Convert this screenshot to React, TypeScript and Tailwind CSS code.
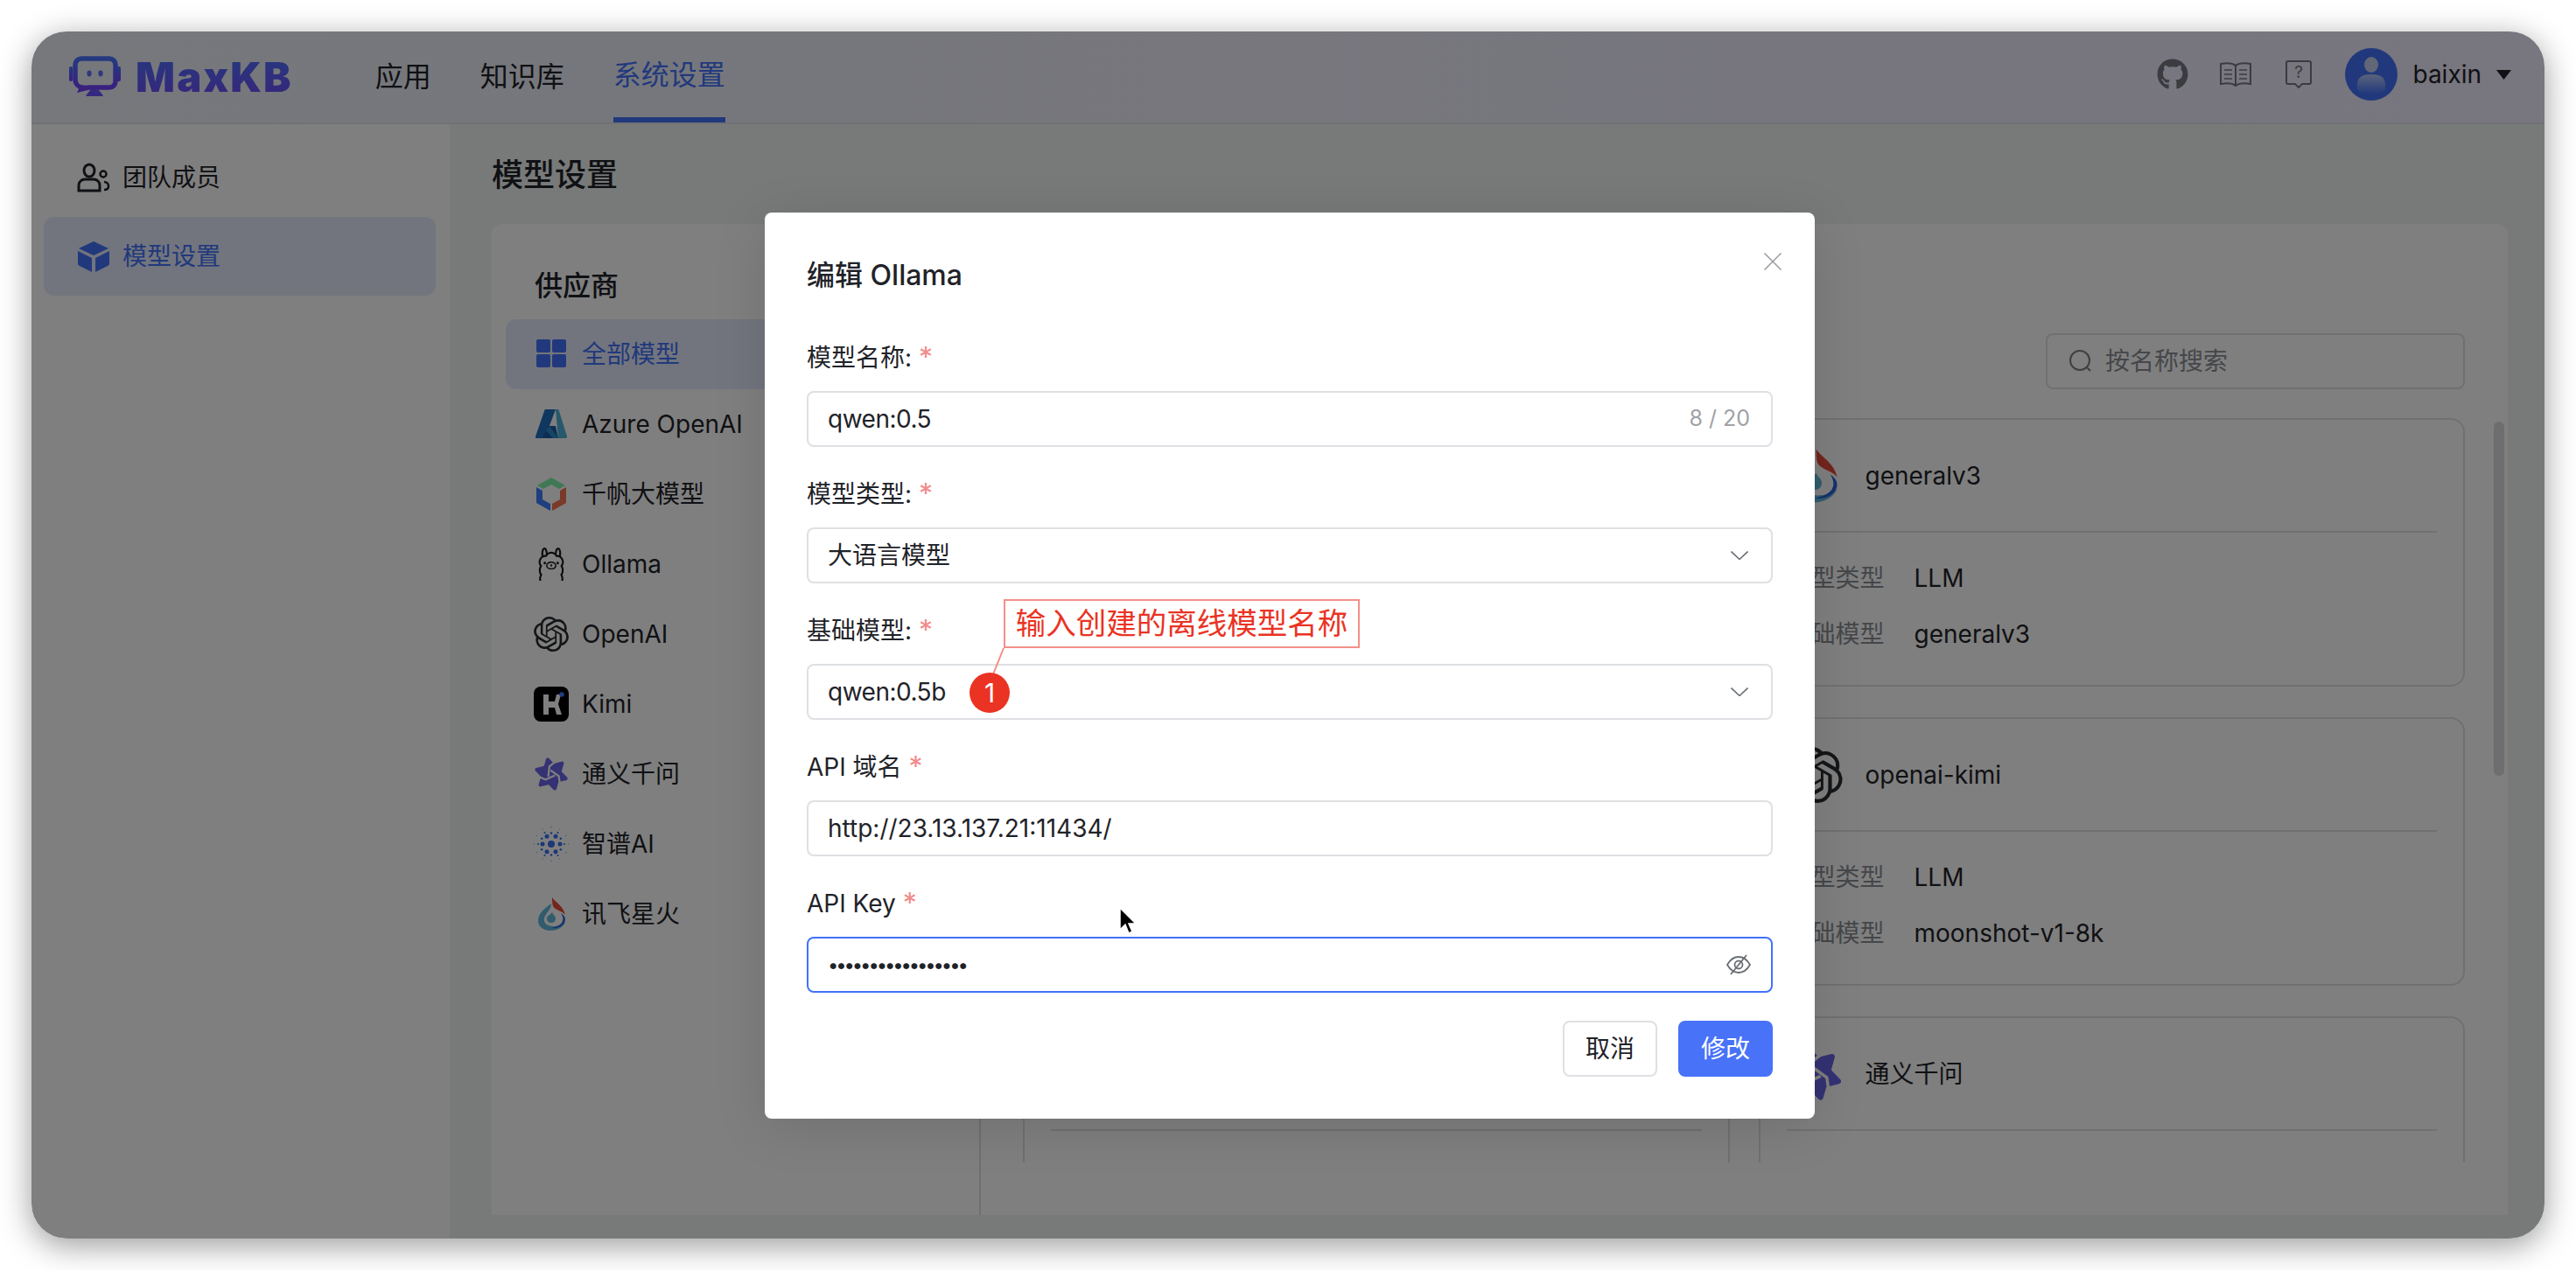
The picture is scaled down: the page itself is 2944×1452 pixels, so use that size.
import React from "react";
import { FaGithub } from "react-icons/fa";
import { SiOllama, SiOpenai } from "react-icons/si";

// ── Provider logos (40 box) ──

function AzureIcon({ size = 40 }: { size?: number }) {
  return (
    <svg width={size} height={size} viewBox="0 0 40 40">
      <path d="M14 3h11L13 35a2 2 0 0 1-2 1H3a1.500 1.500 0 0 1-1-2L12 5a2 2 0 0 1 2-2z" fill="#1f6fc0" />
      <path d="M25 3h2a2 2 0 0 1 2 2l9 29a1.500 1.500 0 0 1-1 2H28z" fill="#4fb0d8" />
      <path d="M17 22h8l3 14H13l-3-1z" fill="#1a5aa8" />
      <path d="M18 22l10 14h-6l-8-9z" fill="#2f8ac8" />
    </svg>
  );
}

function QianfanIcon({ size = 40 }: { size?: number }) {
  return (
    <svg width={size} height={size} viewBox="0 0 40 40">
      <path d="M20 1l16 9-7 4-9-5-9 5-7-4z" fill="#7ef0a8" />
      <path d="M3 12l7 4v10l9 5v8L3 30z" fill="#3e7eff" />
      <path d="M37 12l-7 4v10l-9 5v8l16-9z" fill="#f47454" />
    </svg>
  );
}

function KimiIcon({ size = 40 }: { size?: number }) {
  return (
    <svg width={size} height={size} viewBox="0 0 40 40">
      <rect width="40" height="40" rx="8" fill="#000" />
      <path d="M11 9h6v8h7l2-8h5l-3 11 4 12h-6l-2-8h-7v8h-6z" fill="#fff" />
      <circle cx="32" cy="9" r="2.800" fill="#3f7fff" />
    </svg>
  );
}

function TongyiIcon({ size = 40 }: { size?: number }) {
  return (
    <svg width={size} height={size} viewBox="0 0 40 40">
      <g transform="rotate(-14 20 20)">
        <path d="M20 3l15 26H5z" fill="#6a64e8" stroke="#6a64e8" strokeWidth="4" strokeLinejoin="round" />
        <path d="M20 37L5 11h30z" fill="#6a64e8" stroke="#6a64e8" strokeWidth="4" strokeLinejoin="round" />
        {[0, 120, 240].map((deg) => (
          <path
            key={deg}
            d="M16 22L20 11l9-4"
            fill="none"
            stroke="#fff"
            strokeWidth="2.200"
            transform={`rotate(${deg} 20 20)`}
          />
        ))}
      </g>
    </svg>
  );
}

function ZhipuIcon({ size = 40 }: { size?: number }) {
  const ring = (count: number, radius: number, dot: number, offset: number) =>
    Array.from({ length: count }, (_, i) => {
      const a = (i / count) * Math.PI * 2 + offset;
      return <circle key={`${radius}-${i}-${offset}`} cx={20 + radius * Math.cos(a)} cy={20 + radius * Math.sin(a)} r={dot} fill="#3a70f0" />;
    });
  return (
    <svg width={size} height={size} viewBox="0 0 40 40">
      <circle cx="20" cy="20" r="4" fill="#3a70f0" />
      {ring(6, 10, 2.5, 0)}
      {ring(6, 12.500, 1.300, Math.PI / 6)}
      {ring(6, 15, 1.100, 0)}
      {ring(6, 19.500, 0.600, Math.PI / 6)}
      {ring(6, 19.500, 0.500, 0)}
    </svg>
  );
}

function XunfeiIcon({ size = 40 }: { size?: number }) {
  return (
    <svg width={size} height={size} viewBox="0 0 40 40">
      <path d="M20 8C13 13 5 19 5 28c0 7 7 11 14 11 8 0 15-4 17-10-3 3-8 5-14 5-7 0-11-4-10-9 1-6 8-9 8-17z" fill="#62b8dc" />
      <path d="M21 18c1 3 4 4 4 7 0 3-2 5-5 5s-5-2-5-5c0-3 4-4 6-7z" fill="#62b8dc" />
      <path d="M31 19c5 3 6 7 4 11-3 5-9 7-15 6 6-1 12-4 13-8 1-3 0-6-2-9z" fill="#2a62d8" />
      <path d="M21 1c4 6 13 10 15 20-4-5-11-5-14-10-1-3-1-7-1-10z" fill="#e84a38" />
    </svg>
  );
}

function AllModelsIcon() {
  return (
    <svg width="40" height="40" viewBox="0 0 40 40" fill="#4272f8">
      <rect x="3" y="3" width="16" height="15" rx="2" />
      <rect x="21" y="3" width="16" height="15" rx="2" />
      <rect x="3" y="20" width="16" height="15" rx="2" />
      <rect x="21" y="20" width="16" height="15" rx="2" />
    </svg>
  );
}

const PROVIDERS = [
  { name: "全部模型", icon: <AllModelsIcon />, active: true },
  { name: "Azure OpenAI", icon: <AzureIcon /> },
  { name: "千帆大模型", icon: <QianfanIcon /> },
  { name: "Ollama", icon: <SiOllama size={38} color="#17181a" /> },
  { name: "OpenAI", icon: <SiOpenai size={40} color="#2a2c30" /> },
  { name: "Kimi", icon: <KimiIcon /> },
  { name: "通义千问", icon: <TongyiIcon /> },
  { name: "智谱AI", icon: <ZhipuIcon /> },
  { name: "讯飞星火", icon: <XunfeiIcon /> },
];

const MODELS = [
  { name: "generalv3", icon: <XunfeiIcon size={64} />, type: "LLM", base: "generalv3" },
  { name: "openai-kimi", icon: <SiOpenai size={64} color="#2a2c30" />, type: "LLM", base: "moonshot-v1-8k" },
  { name: "通义千问", icon: <TongyiIcon size={64} /> },
];

function Logo() {
  return (
    <div className="flex items-center gap-[14px] pb-[2px]">
      <svg width="62" height="46" viewBox="0 0 62 46">
        <defs>
          <linearGradient id="logo-grad" x1="0" y1="0" x2="0" y2="1">
            <stop offset="0" stopColor="#4a72ff" />
            <stop offset="1" stopColor="#7440ff" />
          </linearGradient>
        </defs>
        <rect x="0" y="12" width="4" height="17" rx="2" fill="url(#logo-grad)" />
        <rect x="54" y="12" width="5" height="17" rx="2" fill="url(#logo-grad)" />
        <path
          d="M14 3h32a7 7 0 0 1 7 7v19a7 7 0 0 1-7 7H22l-8 2 1-2a9 9 0 0 1-8-8V10a7 7 0 0 1 7-7z"
          fill="none"
          stroke="url(#logo-grad)"
          strokeWidth="5.500"
        />
        <ellipse cx="23" cy="20" rx="2.600" ry="3.400" fill="#5a70ff" />
        <ellipse cx="36" cy="20" rx="2.600" ry="3.400" fill="#5a70ff" />
        <path d="M25 38h8l5 6a1 1 0 0 1-1 2H21a1 1 0 0 1-1-2z" fill="#6a50ff" />
      </svg>
      <span className="text-[47px] leading-none font-black tracking-[2.2px] text-transparent bg-clip-text bg-gradient-to-b from-[#4a70fc] to-[#6c4cf8]">
        MaxKB
      </span>
    </div>
  );
}

function Header() {
  return (
    <header className="h-[106px] shrink-0 flex items-stretch justify-between border-b-2 border-[#e0e2e8] bg-gradient-to-r from-[#ecf0f8] to-[#f0ecfe] pl-[43px] pr-[38px]">
      <div className="flex items-center">
        <Logo />
        <nav className="flex items-stretch h-full ml-[94px] gap-[56px] text-[32px]">
          <span className="flex items-center text-[#1f2329]">应用</span>
          <span className="flex items-center text-[#1f2329]">知识库</span>
          <span className="flex items-center text-[#4272f8] border-b-[6px] border-[#4272f8] pt-[2px]">系统设置</span>
        </nav>
      </div>
      <div className="flex items-center pb-[6px]">
        <FaGithub size={36} color="#757980" />
        <svg className="ml-[35px]" width="38" height="30" viewBox="0 0 38 30" fill="none" stroke="#757980" strokeWidth="2">
          <path d="M19 5C15 2 8 2 2 3v23c6-1 13-1 17 2 4-3 11-3 17-2V3c-6-1-13-1-17 2z" />
          <path d="M19 5v23" />
          <path d="M6 10h9M6 15h9M6 20h9M23 10h9M23 15h9M23 20h9" strokeWidth="1.500" />
        </svg>
        <svg className="ml-[38px]" width="30" height="32" viewBox="0 0 30 32" fill="none" stroke="#757980" strokeWidth="2">
          <path d="M3 1h24a2 2 0 0 1 2 2v22a2 2 0 0 1-2 2h-8l-4 4-4-4H3a2 2 0 0 1-2-2V3a2 2 0 0 1 2-2z" />
          <text x="15" y="20" textAnchor="middle" fontSize="19" fill="#757980" stroke="none" fontFamily="Inter">?</text>
        </svg>
        <svg className="ml-[38px]" width="60" height="60" viewBox="0 0 60 60">
          <defs>
            <linearGradient id="avatar-body" x1="0" y1="0" x2="0" y2="1">
              <stop offset="0" stopColor="#b8c8f8" />
              <stop offset="1" stopColor="#4272f8" />
            </linearGradient>
          </defs>
          <circle cx="30" cy="30" r="30" fill="#4272f8" />
          <ellipse cx="30" cy="19" rx="8" ry="9" fill="#c4cfef" />
          <path d="M14 48V41c0-8 7-11 16-11s16 3 16 11v7c-8 6-24 6-32 0z" fill="url(#avatar-body)" />
        </svg>
        <span className="ml-[17px] text-[28px] leading-none text-[#1f2329]">baixin</span>
        <svg className="ml-[17px]" width="17" height="11" viewBox="0 0 17 11">
          <path d="M0 0h17l-8.500 11z" fill="#1f2329" />
        </svg>
      </div>
    </header>
  );
}

function Sidebar() {
  return (
    <aside className="w-[478px] shrink-0 bg-white flex flex-col pl-[14px] pr-[16px] pt-[16px]">
      <div className="h-[90px] flex items-center gap-[14px] pl-[38px] text-[28px] text-[#1f2329]">
        <svg width="38" height="34" viewBox="0 0 38 34" fill="none" stroke="#1f2329" strokeWidth="3">
          <ellipse cx="14" cy="9" rx="6" ry="7" />
          <path d="M2 32v-6c0-4 3-7 7-7h10c4 0 7 3 7 7v6z" />
          <circle cx="30" cy="13" r="3.500" strokeWidth="2.500" />
          <path d="M31 22c3 0 5 2 5 5s-2 4-5 4" strokeWidth="2.500" />
        </svg>
        团队成员
      </div>
      <div className="h-[90px] flex items-center gap-[14px] pl-[38px] rounded-[12px] bg-[#e4eafc] text-[28px] text-[#4272f8]">
        <svg width="38" height="36" viewBox="0 0 38 36" fill="#4272f8">
          <path d="M19 1l17 8-17 8L2 9z" />
          <path d="M1 12l16 8v16L3 29a3 3 0 0 1-2-3z" />
          <path d="M37 12l-16 8v16l14-7a3 3 0 0 0 2-3z" />
        </svg>
        模型设置
      </div>
    </aside>
  );
}

function ModelCard({ name, icon, type, base }: { name?: string; icon?: React.ReactNode; type?: string; base?: string }) {
  return (
    <div className="h-[307px] rounded-[16px] border-2 border-[#dee0e3] px-[30px] bg-white">
      <div className="h-[129px] flex items-center gap-[26px] border-b-2 border-[#dee0e3] text-[28px] text-[#1f2329]">
        {icon}
        {name}
      </div>
      {type && (
        <div className="pt-[20px] text-[28px]">
          <div className="h-[64px] flex items-center gap-[34px]">
            <span className="text-[#8a8e95]">模型类型</span>
            <span className="text-[#1f2329]">{type}</span>
          </div>
          <div className="h-[64px] flex items-center gap-[34px]">
            <span className="text-[#8a8e95]">基础模型</span>
            <span className="text-[#1f2329]">{base}</span>
          </div>
        </div>
      )}
    </div>
  );
}

function ModelPanel() {
  return (
    <section className="flex-1 min-h-0 rounded-t-[12px] bg-white flex">
      {/* providers */}
      <div className="w-[559px] shrink-0 border-r-2 border-[#dee0e3] px-[16px] pt-[47px]">
        <h3 className="h-[48px] leading-[48px] mb-[14px] pl-[33px] text-[32px] font-medium text-[#1f2329]">供应商</h3>
        {PROVIDERS.map((p) => (
          <div
            key={p.name}
            className={
              p.active
                ? "h-[80px] flex items-center gap-[15px] pl-[32px] rounded-[12px] bg-[#e4eafc] text-[28px] text-[#4272f8]"
                : "h-[80px] flex items-center gap-[15px] pl-[32px] text-[28px] text-[#1f2329]"
            }
          >
            <span className="w-[40px] h-[40px] flex items-center justify-center">{p.icon}</span>
            {p.name}
          </div>
        ))}
      </div>

      {/* models */}
      <div className="relative flex-1 min-w-0 flex flex-col pt-[125px] pb-[60px] pl-[48px] pr-[49px]">
        <div className="self-end w-[479px] h-[64px] shrink-0 mb-[33px] flex items-center gap-[14px] pl-[24px] rounded-[8px] border-2 border-[#dee0e3] text-[28px] text-[#8a8e95]">
          <svg width="28" height="28" viewBox="0 0 28 28" fill="none" stroke="#7a7e85" strokeWidth="2">
            <circle cx="13" cy="13" r="11" />
            <path d="M21 21l4 4" />
          </svg>
          按名称搜索
        </div>
        <div className="flex-1 min-h-0 overflow-hidden grid grid-cols-2 gap-x-[33px] gap-y-[35px] content-start">
          <ModelCard />
          <ModelCard {...MODELS[0]} />
          <ModelCard />
          <ModelCard {...MODELS[1]} />
          <ModelCard />
          <ModelCard {...MODELS[2]} />
        </div>
        {/* scrollbar */}
        <div className="absolute right-[4px] top-[226px] w-[12px] h-[405px] rounded-full bg-[#dcdde0]" />
      </div>
    </section>
  );
}

function Field({ label, children }: { label: string; children: React.ReactNode }) {
  return (
    <div className="mt-[32px] first:mt-0">
      <div className="h-[44px] mb-[16px] flex items-center text-[28px] text-[#1f2329]">
        {label}
        <span className="ml-[8px] text-[32px] text-[#f28a8a]">*</span>
      </div>
      {children}
    </div>
  );
}

const inputBox = "h-[64px] flex items-center justify-between pl-[22px] pr-[24px] rounded-[8px] border-2 border-[#dee0e3] text-[28px] text-[#1f2329]";
const inputBoxFocused = "h-[64px] flex items-center justify-between pl-[22px] pr-[24px] rounded-[8px] border-2 border-[#4272f8] text-[28px] text-[#1f2329]";

function Chevron() {
  return (
    <svg className="mr-[2px]" width="20" height="10" viewBox="0 0 20 10" fill="none" stroke="#6b6f75" strokeWidth="1.600">
      <path d="M0.500 0.500L10 9.500l9.500-9" />
    </svg>
  );
}

function EditDialog() {
  return (
    <div className="absolute left-[838px] top-[207px] w-[1200px] h-[1036px] rounded-[8px] bg-white p-[48px] shadow-[0_10px_60px_rgba(0,0,0,0.12)]">
      <div className="h-[48px] mb-[48px] flex items-center text-[32px] font-medium text-[#1f2329]">编辑 Ollama</div>
      <svg className="absolute left-[1142px] top-[46px]" width="20" height="20" viewBox="0 0 20 20" stroke="#98999e" strokeWidth="1.500">
        <path d="M0.500 0.500l19 19M19.500 0.500l-19 19" />
      </svg>

      <Field label="模型名称:">
        <div className={inputBox}>
          <span className="tracking-[-0.5px]">qwen:0.5</span>
          <span className="text-[25px] text-[#a0a1a6]">8 / 20</span>
        </div>
      </Field>
      <Field label="模型类型:">
        <div className={inputBox}>
          大语言模型
          <Chevron />
        </div>
      </Field>
      <Field label="基础模型:">
        <div className={inputBox}>
          <span className="tracking-[-0.5px]">qwen:0.5b</span>
          <Chevron />
        </div>
      </Field>
      <Field label="API 域名">
        <div className={inputBox}>http://23.13.137.21:11434/</div>
      </Field>
      <Field label="API Key">
        <div className={inputBoxFocused}>
          <span className="text-[22px] tracking-[-3.1px]">•••••••••••••••••</span>
          <svg className="-mr-[2px]" width="30" height="30" viewBox="0 0 30 30" fill="none" stroke="#6b6f75" strokeWidth="1.800">
            <path d="M2 15c4-7 9-9 13-9s9 2 13 9c-4 7-9 9-13 9s-9-2-13-9z" />
            <circle cx="15" cy="15" r="4.500" />
            <path d="M24 4L6 26" />
          </svg>
        </div>
      </Field>

      <div className="mt-[32px] flex justify-end gap-[24px] text-[28px]">
        <button className="w-[108px] h-[64px] rounded-[8px] border-2 border-[#dee0e3] bg-white text-[#1f2329]">取消</button>
        <button className="w-[108px] h-[64px] rounded-[8px] bg-[#4872f8] text-white">修改</button>
      </div>

      {/* callout drawn over the screenshot */}
      <div className="absolute left-[273px] top-[442px] w-[407px] h-[56px] flex items-center justify-center border-2 border-[#f39089] bg-white text-[34.500px] text-[#ea3323]">
        输入创建的离线模型名称
      </div>
      <svg className="absolute left-[258px] top-[497px]" width="16" height="32" viewBox="0 0 16 32" fill="none" stroke="#f39089" strokeWidth="2">
        <path d="M15 1L3 31" />
      </svg>
      <div className="absolute left-[234px] top-[526px] w-[46px] h-[46px] rounded-full bg-[#ea3323] flex items-center justify-center text-[30px] text-white">1</div>

      {/* mouse pointer */}
      <svg className="absolute left-[404px] top-[793px]" width="22" height="34" viewBox="0 0 22 34">
        <path d="M2 2v25l6-6 4 10 4-2-4-9h8z" fill="#000" stroke="#fff" strokeWidth="1.500" />
      </svg>
    </div>
  );
}

export default function App() {
  return (
    <div className="w-[2944px] h-[1452px] p-[36px] bg-white [font-family:Inter,'Noto_Sans_CJK_SC',sans-serif]">
      <div className="relative w-full h-full rounded-[40px] overflow-hidden flex flex-col shadow-[0_8px_36px_rgba(0,0,0,0.4)]">
        <Header />
        <div className="flex-1 min-h-0 flex bg-[#f0f5f2]">
          <Sidebar />
          <main className="flex-1 min-w-0 flex flex-col pl-[48px] pr-[42px] pb-[27px]">
            <h2 className="h-[60px] mt-[28px] mb-[26px] leading-[60px] shrink-0 text-[36px] font-medium text-[#1f2329]">模型设置</h2>
            <ModelPanel />
          </main>
        </div>
        {/* modal mask */}
        <div className="absolute inset-0 bg-black/50" />
        <EditDialog />
      </div>
    </div>
  );
}
